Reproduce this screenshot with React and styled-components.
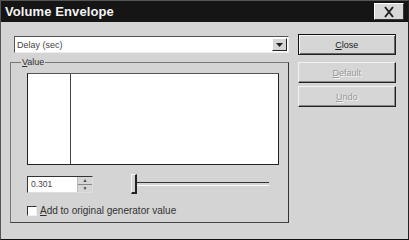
import React from "react";
import styled, { createGlobalStyle } from "styled-components";

const Global = createGlobalStyle`
  html, body { margin: 0; padding: 0; background: #d2d2d2; }
  body { font-family: "Liberation Sans", Arial, sans-serif; font-size: 9px; color: #222; }
`;

const Dialog = styled.div`
  width: 409px;
  height: 240px;
  box-sizing: border-box;
  background: #d4d4d4;
  border: 1px solid #555;
  border-right-color: #222;
  border-bottom-color: #111;
  display: flex;
  flex-direction: column;
  overflow: hidden;
`;

const TitleBar = styled.div`
  height: 21px;
  background: #151515;
  display: flex;
  align-items: center;
  justify-content: space-between;
  padding: 0 4px 0 4px;
  flex-shrink: 0;
`;

const Title = styled.div`
  color: #f4f4f4;
  font-weight: bold;
  font-size: 13px;
  letter-spacing: 0.1px;
`;

const CloseBox = styled.div`
  width: 30px;
  height: 17px;
  box-sizing: border-box;
  background: #d8d8d8;
  border: 1px solid #fff;
  border-right-color: #333;
  border-bottom-color: #333;
  display: flex;
  align-items: center;
  justify-content: center;
`;

const Body = styled.div`
  flex: 1;
  display: flex;
  padding: 14px 12px 0 13px;
  gap: 9px;
`;

const LeftCol = styled.div`
  width: 276px;
  display: flex;
  flex-direction: column;
`;

const Combo = styled.div`
  height: 17px;
  box-sizing: border-box;
  background: #fff;
  border: 1px solid #555;
  border-right-color: #eee;
  border-bottom-color: #eee;
  display: flex;
  align-items: center;
  justify-content: space-between;
  padding-left: 2px;
  color: #444;
  font-size: 9px;
`;

const ArrowBtn = styled.div`
  width: 15px;
  height: 13px;
  margin-right: 1px;
  box-sizing: border-box;
  background: #d6d6d6;
  border: 1px solid #fff;
  border-right-color: #222;
  border-bottom-color: #222;
  display: flex;
  align-items: center;
  justify-content: center;
`;

const Group = styled.fieldset`
  margin: 4px 0 0 -4px;
  padding: 6px 8px 0 16px;
  height: 166px;
  box-sizing: border-box;
  border: 1px solid #777;
  border-right-color: #333;
  border-bottom-color: #444;
  display: flex;
  flex-direction: column;
`;

const Legend = styled.legend`
  padding: 0 1px;
  margin-left: -6px;
  color: #333;
  font-size: 9px;
`;

const ListArea = styled.div`
  height: 92px;
  width: 252px;
  box-sizing: border-box;
  background: #fff;
  border: 1px solid #222;
  border-top-color: #555;
  display: flex;
`;

const ListColumn = styled.div`
  width: 42px;
  border-right: 1px solid #444;
`;

const Controls = styled.div`
  display: flex;
  align-items: center;
  margin-top: 8px;
  gap: 38px;
`;

const Spin = styled.div`
  width: 66px;
  height: 17px;
  box-sizing: border-box;
  background: #fff;
  border: 1px solid #333;
  border-right-color: #ddd;
  border-bottom-color: #ddd;
  display: flex;
  align-items: center;
  justify-content: space-between;
  padding-left: 3px;
  font-size: 8.5px;
  color: #444;
`;

const SpinButtons = styled.div`
  width: 14px;
  height: 15px;
  display: flex;
  flex-direction: column;
  background: #d6d6d6;
  border-left: 1px solid #bbb;
`;

const SpinHalf = styled.div`
  flex: 1;
  display: flex;
  align-items: center;
  justify-content: center;
  border-bottom: ${(p) => (p.top ? "1px solid #888" : "none")};
  font-size: 5px;
  line-height: 1;
  color: #444;
`;

const Slider = styled.div`
  display: flex;
  align-items: center;
  height: 22px;
`;

const Thumb = styled.div`
  width: 6px;
  height: 20px;
  box-sizing: border-box;
  border-left: 1px solid #f4f4f4;
  border-top: 1px solid #f4f4f4;
  border-right: 2px solid #222;
  border-bottom: 2px solid #222;
  background: #d4d4d4;
`;

const Track = styled.div`
  width: 132px;
  height: 2px;
  border-top: 1px solid #333;
  border-bottom: 1px solid #fafafa;
`;

const CheckRow = styled.label`
  display: flex;
  align-items: center;
  gap: 3px;
  margin-top: 10px;
  color: #333;
  font-size: 10px;
`;

const CheckBox = styled.span`
  width: 10px;
  height: 10px;
  box-sizing: border-box;
  background: #fff;
  border: 1px solid #333;
  border-right-color: #eee;
  border-bottom-color: #eee;
`;

const RightCol = styled.div`
  width: 99px;
  display: flex;
  flex-direction: column;
  margin-top: -2px;
`;

const Button = styled.div`
  height: 21px;
  margin-bottom: ${(p) => p.$after || 0}px;
  box-sizing: border-box;
  border: 1px solid ${(p) => (p.$primary ? "#111" : "#f2f2f2")};
  border-right-color: #222;
  border-bottom-color: #222;
  box-shadow: ${(p) => (p.$primary ? "inset 1px 1px 0 #f4f4f4, inset -1px -1px 0 #666" : "inset -1px -1px 0 #888")};
  background: #d6d6d6;
  display: flex;
  align-items: center;
  justify-content: center;
  font-size: 9px;
  color: ${(p) => (p.$disabled ? "#999" : "#222")};
  text-shadow: ${(p) => (p.$disabled ? "1px 1px 0 #f4f4f4" : "none")};
`;

const U = styled.span`
  text-decoration: underline;
`;

export default function App() {
  return (
    <>
      <Global />
      <Dialog>
        <TitleBar>
          <Title>Volume Envelope</Title>
          <CloseBox>
            <svg width="14" height="12" viewBox="0 0 14 12">
              <path d="M3 1 L11 11 M11 1 L3 11" stroke="#222" strokeWidth="2" />
            </svg>
          </CloseBox>
        </TitleBar>
        <Body>
          <LeftCol>
            <Combo>
              Delay (sec)
              <ArrowBtn>
                <svg width="7" height="4" viewBox="0 0 7 4">
                  <path d="M0 0 H7 L3.5 4 Z" fill="#222" />
                </svg>
              </ArrowBtn>
            </Combo>
            <Group>
              <Legend>
                <U>V</U>alue
              </Legend>
              <ListArea>
                <ListColumn />
              </ListArea>
              <Controls>
                <Spin>
                  0.301
                  <SpinButtons>
                    <SpinHalf top>▲</SpinHalf>
                    <SpinHalf>▼</SpinHalf>
                  </SpinButtons>
                </Spin>
                <Slider>
                  <Thumb />
                  <Track />
                </Slider>
              </Controls>
              <CheckRow>
                <CheckBox />
                <span>
                  <U>A</U>dd to original generator value
                </span>
              </CheckRow>
            </Group>
          </LeftCol>
          <RightCol>
            <Button $primary $after={7}>
              <U>C</U>lose
            </Button>
            <Button $disabled $after={3}>
              <U>D</U>efault
            </Button>
            <Button $disabled>
              <U>U</U>ndo
            </Button>
          </RightCol>
        </Body>
      </Dialog>
    </>
  );
}
